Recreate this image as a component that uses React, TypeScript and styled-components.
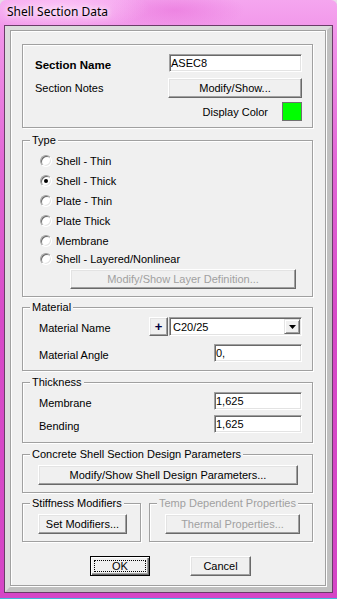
import React from 'react';
import styled, { createGlobalStyle } from 'styled-components';

const GlobalStyle = createGlobalStyle`
  * { box-sizing: border-box; }
  html, body { margin: 0; padding: 0; }
  body {
    background: #e9dbe8;
    font-family: "Liberation Sans", Arial, sans-serif;
    font-size: 11px;
    color: #000;
  }
`;

const shellTypes = [
  'Shell - Thin',
  'Shell - Thick',
  'Plate - Thin',
  'Plate Thick',
  'Membrane',
  'Shell - Layered/Nonlinear',
];

const App: React.FC = () => {
  return (
    <>
      <GlobalStyle />
      <Window>
        <TitleBar>
          <Title>Shell Section Data</Title>
        </TitleBar>
        <Client>
          <Bevel>
            <Frame>
              <SectionBox>
                <Row>
                  <NameLabel>Section Name</NameLabel>
                  <Field $width={133} defaultValue="ASEC8" readOnly />
                </Row>
                <Row $mt={6}>
                  <Label>Section Notes</Label>
                  <Button $width={134}>Modify/Show...</Button>
                </Row>
                <Row $mt={4} $end>
                  <Label>Display Color</Label>
                  <Swatch />
                </Row>
              </SectionBox>

              <TypeBox $mt={12}>
                <Legend>Type</Legend>
                {shellTypes.map((t, i) => (
                  <RadioRow key={t} $mt={i === 0 ? 0 : i === 5 ? 2 : 4}>
                    <RadioDot $checked={i === 1} />
                    {t}
                  </RadioRow>
                ))}
                <LayerButton disabled>Modify/Show Layer Definition...</LayerButton>
              </TypeBox>

              <MaterialBox $mt={10}>
                <Legend>Material</Legend>
                <Row>
                  <FieldLabel>Material Name</FieldLabel>
                  <Controls>
                    <PlusButton>+</PlusButton>
                    <Combo>
                      <ComboText>C20/25</ComboText>
                      <ComboArrow>
                        <svg width="7" height="4" viewBox="0 0 7 4">
                          <polygon points="0,0 7,0 3.5,4" fill="#000" />
                        </svg>
                      </ComboArrow>
                    </Combo>
                  </Controls>
                </Row>
                <Row $mt={8}>
                  <FieldLabel>Material Angle</FieldLabel>
                  <Field $width={88} defaultValue="0," readOnly />
                </Row>
              </MaterialBox>

              <ThicknessBox $mt={11}>
                <Legend>Thickness</Legend>
                <Row>
                  <FieldLabel>Membrane</FieldLabel>
                  <Field $width={88} defaultValue="1,625" readOnly />
                </Row>
                <Row $mt={5}>
                  <FieldLabel>Bending</FieldLabel>
                  <Field $width={88} defaultValue="1,625" readOnly />
                </Row>
              </ThicknessBox>

              <ConcreteBox $mt={11}>
                <Legend>Concrete Shell Section Design Parameters</Legend>
                <Button>Modify/Show Shell Design Parameters...</Button>
              </ConcreteBox>

              <SplitRow>
                <StiffnessBox>
                  <Legend>Stiffness Modifiers</Legend>
                  <Button $width={89}>Set Modifiers...</Button>
                </StiffnessBox>
                <TempBox>
                  <Legend $disabled>Temp Dependent Properties</Legend>
                  <Button $width={135} disabled>Thermal Properties...</Button>
                </TempBox>
              </SplitRow>

              <DialogButtons>
                <DefaultButton $width={60}>OK</DefaultButton>
                <Button $width={61}>Cancel</Button>
              </DialogButtons>
            </Frame>
          </Bevel>
        </Client>
      </Window>
    </>
  );
};

const Window = styled.div`
  width: 337px;
  height: 599px;
  display: flex;
  flex-direction: column;
  padding: 0 4px 6px;
  border-radius: 6px 6px 0 0;
  background:
    radial-gradient(ellipse 90px 22px at 60px 8px, rgba(255, 210, 250, 0.7), transparent),
    radial-gradient(ellipse 70px 20px at 175px 10px, rgba(225, 80, 205, 0.35), transparent),
    linear-gradient(180deg, #f5a6ef 0px, #f092e8 40px, #e268d6 160px, #d74ac8 320px, #d546c6 100%);
  box-shadow: inset 0 -1px 0 #45b8dc;
`;

const TitleBar = styled.div`
  height: 25px;
  padding: 4px 0 0 3px;
`;

const Title = styled.div`
  font-family: "Noto Sans", "Open Sans", sans-serif;
  font-size: 12px;
  line-height: 16px;
  color: #000;
  text-shadow: 0 0 5px #fff, 0 0 9px rgba(255, 255, 255, 0.85);
`;

const Client = styled.div`
  flex: 1;
  display: flex;
  border: 1px solid #6a3c68;
`;

const Bevel = styled.div`
  flex: 1;
  display: flex;
  background: #f0f0f0;
  border-style: solid;
  border-width: 4px 5px 5px;
  border-color: #dcdcdc #c0c0c0 #c0c0c0 #dcdcdc;
`;

const Frame = styled.div`
  flex: 1;
  display: flex;
  flex-direction: column;
  margin: 0 1px 1px 0;
  padding: 13px 12px 0 11px;
  border: 1px solid #a0a0a0;
  box-shadow: inset 1px 1px 0 #fff, 1px 1px 0 #fff;
`;

const GroupBox = styled.div<{ $mt?: number }>`
  position: relative;
  display: flex;
  flex-direction: column;
  margin-top: ${(p) => p.$mt ?? 0}px;
  border: 1px solid #a0a0a0;
  box-shadow: inset 1px 1px 0 #fff, 1px 1px 0 #fff;
`;

const Legend = styled.span<{ $disabled?: boolean }>`
  position: absolute;
  top: -8px;
  left: 7px;
  padding: 0 2px;
  line-height: 14px;
  white-space: nowrap;
  background: #f0f0f0;
  color: ${(p) => (p.$disabled ? '#a0a0a0' : '#000')};
`;

const SectionBox = styled(GroupBox)`
  padding: 9px 10px 6px 12px;
`;

const TypeBox = styled(GroupBox)`
  padding: 12px 0 7px 17px;
`;

const MaterialBox = styled(GroupBox)`
  padding: 9px 10px 8px 16px;
`;

const ThicknessBox = styled(GroupBox)`
  padding: 9px 10px 9px 16px;
`;

const ConcreteBox = styled(GroupBox)`
  padding: 10px 14px 7px 15px;
`;

const SplitRow = styled.div`
  display: flex;
  gap: 8px;
  margin-top: 10px;
`;

const StiffnessBox = styled(GroupBox)`
  width: 119px;
  padding: 10px 0 7px 15px;
`;

const TempBox = styled(GroupBox)`
  flex: 1;
  padding: 10px 0 7px 15px;
`;

const Row = styled.div<{ $mt?: number; $end?: boolean }>`
  display: flex;
  align-items: center;
  justify-content: ${(p) => (p.$end ? 'flex-end' : 'space-between')};
  gap: 14px;
  margin-top: ${(p) => p.$mt ?? 0}px;
`;

const Label = styled.span`
  line-height: 14px;
  white-space: nowrap;
`;

const NameLabel = styled(Label)`
  padding-top: 4px;
  font-weight: bold;
  font-size: 11.5px;
`;

const FieldLabel = styled(Label)`
  padding-top: 3px;
`;

const Field = styled.input<{ $width: number }>`
  width: ${(p) => p.$width}px;
  height: 18px;
  margin: 0;
  padding: 0 0 0 1px;
  font: inherit;
  font-size: 11px;
  color: #000;
  background: #fff;
  outline: none;
  border: 1px solid;
  border-color: #a0a0a0 #fff #fff #a0a0a0;
  box-shadow: inset 1px 1px 0 #696969, inset -1px -1px 0 #e3e3e3;
`;

const Swatch = styled.span`
  width: 20px;
  height: 19px;
  background: #00ff00;
  border: 1px solid #707070;
`;

const Button = styled.button<{ $width?: number }>`
  width: ${(p) => (p.$width ? `${p.$width}px` : '100%')};
  height: 20px;
  margin: 0;
  padding: 0;
  font: inherit;
  font-size: 11px;
  line-height: 14px;
  white-space: nowrap;
  color: ${(p) => (p.disabled ? '#a0a0a0' : '#000')};
  background: #f0f0f0;
  border: 1px solid;
  border-color: #fff #696969 #696969 #fff;
  box-shadow: inset -1px -1px 0 #a0a0a0, inset 1px 1px 0 #e3e3e3;
`;

const LayerButton = styled(Button)`
  width: 226px;
  margin: 2px 0 0 30px;
`;

const DefaultButton = styled(Button)`
  position: relative;
  border: 1px solid #000;
  box-shadow: inset 1px 1px 0 #fff, inset -1px -1px 0 #696969, inset -2px -2px 0 #a0a0a0;

  &::after {
    content: '';
    position: absolute;
    inset: 3px;
    border: 1px dotted #000;
  }
`;

const DialogButtons = styled.div`
  display: flex;
  gap: 40px;
  margin-top: 14px;
  padding-left: 68px;
`;

const RadioRow = styled.label<{ $mt: number }>`
  display: flex;
  align-items: center;
  gap: 4px;
  height: 16px;
  line-height: 14px;
  margin-top: ${(p) => p.$mt}px;
  white-space: nowrap;
`;

const RadioDot = styled.span<{ $checked?: boolean }>`
  position: relative;
  flex: none;
  width: 12px;
  height: 12px;
  border-radius: 50%;
  background: #fff;
  border: 1px solid;
  border-color: #a0a0a0 #fff #fff #a0a0a0;
  box-shadow: inset 1px 1px 0 #696969, inset -1px -1px 0 #e3e3e3;

  &::after {
    content: '';
    display: ${(p) => (p.$checked ? 'block' : 'none')};
    position: absolute;
    left: 3px;
    top: 3px;
    width: 4px;
    height: 4px;
    border-radius: 50%;
    background: #000;
  }
`;

const Controls = styled.div`
  display: flex;
  gap: 1px;
`;

const PlusButton = styled(Button)`
  width: 19px;
  height: 19px;
  font-size: 13px;
  font-weight: bold;
  color: #000040;
`;

const Combo = styled.div`
  display: flex;
  align-items: center;
  width: 133px;
  height: 19px;
  padding: 1px;
  background: #fff;
  border: 1px solid;
  border-color: #a0a0a0 #fff #fff #a0a0a0;
  box-shadow: inset 1px 1px 0 #696969, inset -1px -1px 0 #e3e3e3;
`;

const ComboText = styled.span`
  flex: 1;
  padding-left: 2px;
  line-height: 14px;
`;

const ComboArrow = styled.span`
  display: flex;
  align-items: center;
  justify-content: center;
  width: 16px;
  height: 15px;
  background: #f0f0f0;
  border: 1px solid;
  border-color: #e3e3e3 #696969 #696969 #e3e3e3;
  box-shadow: inset 1px 1px 0 #fff, inset -1px -1px 0 #a0a0a0;
`;

export default App;
